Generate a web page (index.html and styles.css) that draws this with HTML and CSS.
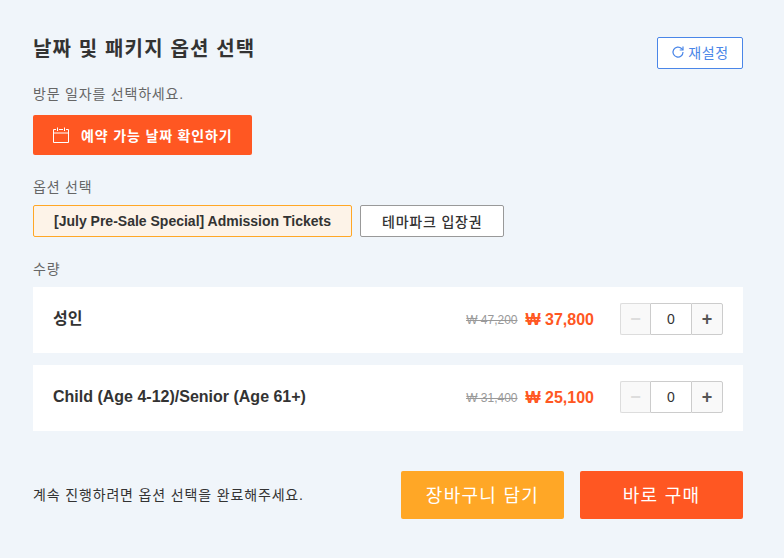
FILE: index.html
```html
<!DOCTYPE html>
<html lang="ko">
<head>
  <meta charset="UTF-8">
  <title>날짜 및 패키지 옵션 선택</title>
  <link rel="stylesheet" href="styles.css">
</head>
<body>
  <div class="booking">
    <div class="head">
      <h2>날짜 및 패키지 옵션 선택</h2>
      <button class="reset">
        <svg width="14" height="14" viewBox="0 0 14 14" fill="none" stroke="#4a86e8" stroke-width="1.2"><path d="M12 7a5 5 0 1 1-1.5-3.5l1.4 1.3"/><path d="M12 1.6v3.4H8.7"/></svg>
        재설정
      </button>
    </div>

    <p class="label first">방문 일자를 선택하세요.</p>
    <button class="date-btn">
      <svg width="16" height="16" viewBox="0 0 16 16" fill="none" stroke="#fff" stroke-width="1"><path d="M3 2.5H0.5V15.5H15.5V2.5H13M6 2.5h4M0.5 6h15M4.5 0.5v3.5M11.5 0.5v3.5"/></svg>
      예약 가능 날짜 확인하기
    </button>

    <p class="label">옵션 선택</p>
    <div class="options">
      <button class="option active">[July Pre-Sale Special] Admission Tickets</button>
      <button class="option">테마파크 입장권</button>
    </div>

    <p class="label qty-label">수량</p>
    <div class="row">
      <span class="name">성인</span>
      <span class="old">₩ 47,200</span>
      <span class="price">₩ 37,800</span>
      <div class="stepper">
        <button class="off">−</button><span>0</span><button>+</button>
      </div>
    </div>
    <div class="row">
      <span class="name">Child (Age 4-12)/Senior (Age 61+)</span>
      <span class="old">₩ 31,400</span>
      <span class="price">₩ 25,100</span>
      <div class="stepper">
        <button class="off">−</button><span>0</span><button>+</button>
      </div>
    </div>

    <div class="foot">
      <p>계속 진행하려면 옵션 선택을 완료해주세요.</p>
      <button class="cart">장바구니 담기</button>
      <button class="buy">바로 구매</button>
    </div>
  </div>
</body>
</html>
```
FILE: styles.css
```css
* { box-sizing: border-box; }
body {
  margin: 0;
  background: #f0f5fa;
  color: #333;
  font-family: "Liberation Sans", "Noto Sans CJK KR", sans-serif;
}
button {
  font-family: inherit;
  cursor: pointer;
}
p { margin: 0; }
.booking {
  width: 784px;
  height: 558px;
  padding: 37px 41px 0 33px;
}
.head {
  display: flex;
  justify-content: space-between;
  align-items: flex-start;
  height: 32px;
}
h2 {
  margin: 0;
  font-size: 20px;
  line-height: 24px;
  font-weight: 700;
  letter-spacing: 1.15px;
}
.reset {
  display: flex;
  align-items: center;
  justify-content: center;
  gap: 3px;
  width: 86px;
  height: 32px;
  padding: 0 0 2px;
  background: #fff;
  color: #4a86e8;
  border: 1px solid #4a86e8;
  border-radius: 2px;
  font-size: 14px;
  letter-spacing: 0.7px;
}
.label {
  font-size: 14px;
  line-height: 20px;
  color: #666;
  letter-spacing: 0.8px;
}
.first { margin-top: 15px; }
.date-btn {
  display: flex;
  align-items: center;
  gap: 12px;
  width: 219px;
  height: 40px;
  margin: 11px 0 22px;
  padding: 0 0 0 20px;
  background: #ff5722;
  color: #fff;
  border: 0;
  border-radius: 2px;
  font-size: 14px;
  font-weight: 700;
  letter-spacing: 0.85px;
}
.options {
  display: flex;
  gap: 8px;
  margin-top: 8px;
}
.option {
  height: 32px;
  padding: 0 21px;
  background: #fff;
  color: #333;
  border: 1px solid #999;
  border-radius: 2px;
  font-size: 14px;
  font-weight: 500;
  letter-spacing: 0.8px;
}
.option.active {
  padding: 0 20px;
  background: #fdf3e8;
  border-color: #ffa726;
  font-weight: 700;
  letter-spacing: 0;
}
.qty-label { margin: 22px 0 8px; }
.row {
  display: flex;
  align-items: center;
  height: 66px;
  margin-bottom: 12px;
  padding: 0 20px;
  background: #fff;
}
.name {
  flex: 1;
  margin-top: -6px;
  font-size: 16px;
  font-weight: 700;
}
.row + .row .name { margin-top: -2px; }
.old {
  margin-right: 8px;
  font-size: 12px;
  color: #999;
  text-decoration: line-through;
}
.price {
  margin-right: 26px;
  font-size: 16px;
  font-weight: 700;
  color: #ff5722;
}
.stepper {
  display: flex;
  width: 103px;
  height: 32px;
  margin-top: -2px;
}
.stepper button {
  width: 32px;
  background: #f9f9f9;
  border: 1px solid #ccc;
  border-radius: 0 2px 2px 0;
  font-size: 18px;
  font-weight: 700;
  line-height: 1;
  color: #555;
  padding: 0;
}
.stepper button.off {
  width: 31px;
  border-color: #ddd;
  border-radius: 2px 0 0 2px;
  border-right-color: #ccc;
  color: #ddd;
}
.stepper span {
  flex: 1;
  text-align: center;
  line-height: 30px;
  font-size: 14px;
  border-top: 1px solid #ccc;
  border-bottom: 1px solid #ccc;
}
.foot {
  display: flex;
  align-items: center;
  margin-top: 40px;
}
.foot p {
  flex: 1;
  margin-top: -2px;
  font-size: 14px;
  letter-spacing: 0.85px;
}
.cart, .buy {
  height: 48px;
  padding: 0 0 3px;
  border: 0;
  border-radius: 2px;
  color: #fff;
  font-size: 18px;
  letter-spacing: 1.3px;
}
.cart {
  width: 163px;
  margin-right: 16px;
  background: #ffa726;
}
.buy {
  width: 163px;
  background: #ff5722;
}
```
